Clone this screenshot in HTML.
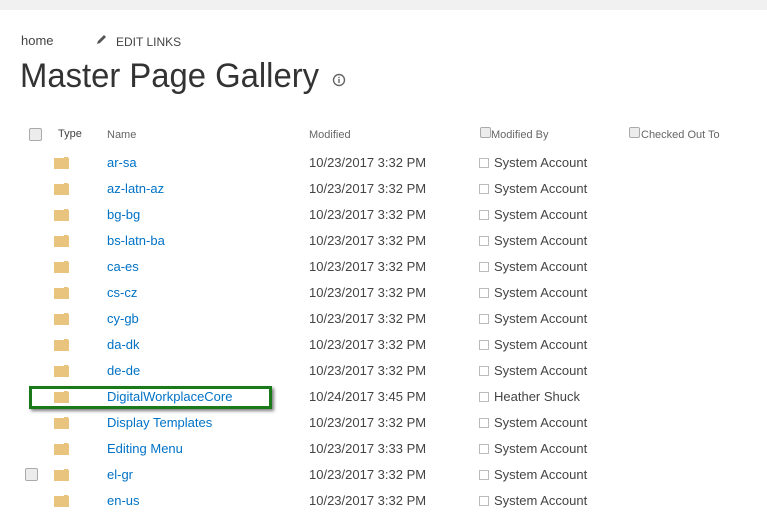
<!DOCTYPE html>
<html><head><style>
body{margin:0;width:767px;height:520px;background:#fff;font-family:"Liberation Sans",sans-serif;position:relative;overflow:hidden}
.a{position:absolute;white-space:nowrap}
.top{position:absolute;left:0;top:0;width:767px;height:10px;background:#f1f1f1}
.hd{font-size:11px;color:#666}
.cb{position:absolute;width:11px;height:11px;border:1px solid #aaa;border-radius:2px;background:#ececec}
.sq{position:absolute;width:8px;height:8px;border:1px solid #bbb;background:#fff}
.f{position:absolute;left:54px;width:15px;height:11px;background:#e9c47f}
.f:before{content:"";position:absolute;right:0;top:-2px;width:6px;height:2px;background:#e9c47f;border:1px solid #fff;border-bottom:none;box-sizing:border-box}
.n{left:107px;font-size:13px;color:#0072c6}
.d{left:309px;font-size:13px;color:#444}
.u{left:494px;font-size:13px;color:#444}
</style></head><body>
<div class="top"></div>
<div class="a" style="left:21px;top:33px;font-size:13px;color:#444">home</div>
<svg class="a" style="left:96px;top:34px" width="11" height="11" viewBox="0 0 11 11"><path d="M1 10 L2 7 L8 1 L10 3 L4 9 Z" fill="#555"/></svg>
<div class="a" style="left:116px;top:35px;font-size:12px;color:#444">EDIT LINKS</div>
<div class="a" style="left:20px;top:57px;font-size:34px;color:#333;transform:scaleX(0.965);transform-origin:left top">Master Page Gallery</div>
<svg class="a" style="left:332px;top:73px" width="14" height="14" viewBox="0 0 14 14"><circle cx="7" cy="7" r="5.5" fill="none" stroke="#666" stroke-width="1.4"/><rect x="6.3" y="6" width="1.4" height="4" fill="#666"/><rect x="6.3" y="3.8" width="1.4" height="1.4" fill="#666"/></svg>
<div class="cb" style="left:29px;top:128px"></div>
<div class="a hd" style="left:58px;top:128px;color:#444">Type</div>
<div class="a hd" style="left:107px;top:129px">Name</div>
<div class="a hd" style="left:309px;top:129px">Modified</div>
<div class="cb" style="left:480px;top:127px;width:9px;height:9px"></div>
<div class="a hd" style="left:491px;top:129px">Modified By</div>
<div class="cb" style="left:629px;top:127px;width:9px;height:9px"></div>
<div class="a hd" style="left:641px;top:129px">Checked Out To</div>
<div id="rows"></div>
<script>
var r=[["ar-sa","10/23/2017 3:32 PM","System Account"],["az-latn-az","10/23/2017 3:32 PM","System Account"],["bg-bg","10/23/2017 3:32 PM","System Account"],["bs-latn-ba","10/23/2017 3:32 PM","System Account"],["ca-es","10/23/2017 3:32 PM","System Account"],["cs-cz","10/23/2017 3:32 PM","System Account"],["cy-gb","10/23/2017 3:32 PM","System Account"],["da-dk","10/23/2017 3:32 PM","System Account"],["de-de","10/23/2017 3:32 PM","System Account"],["DigitalWorkplaceCore","10/24/2017 3:45 PM","Heather Shuck"],["Display Templates","10/23/2017 3:32 PM","System Account"],["Editing Menu","10/23/2017 3:33 PM","System Account"],["el-gr","10/23/2017 3:32 PM","System Account"],["en-us","10/23/2017 3:32 PM","System Account"]];
var h="";r.forEach(function(x,i){var c=162+26*i;
h+='<div class="f" style="top:'+(c-4)+'px"></div><div class="a n" style="top:'+(c-7)+'px">'+x[0]+'</div><div class="a d" style="top:'+(c-7)+'px">'+x[1]+'</div><div class="sq" style="left:479px;top:'+(c-4)+'px"></div><div class="a u" style="top:'+(c-7)+'px">'+x[2]+'</div>';
if(i==12)h+='<div class="cb" style="left:25px;top:'+(c-6)+'px"></div>';});
document.getElementById("rows").innerHTML=h;
</script>
<div class="a" style="left:29px;top:386px;width:237px;height:17px;border:3px solid #1a7a1a;box-shadow:2px 2px 3px rgba(0,0,0,.5)"></div>
</body></html>
